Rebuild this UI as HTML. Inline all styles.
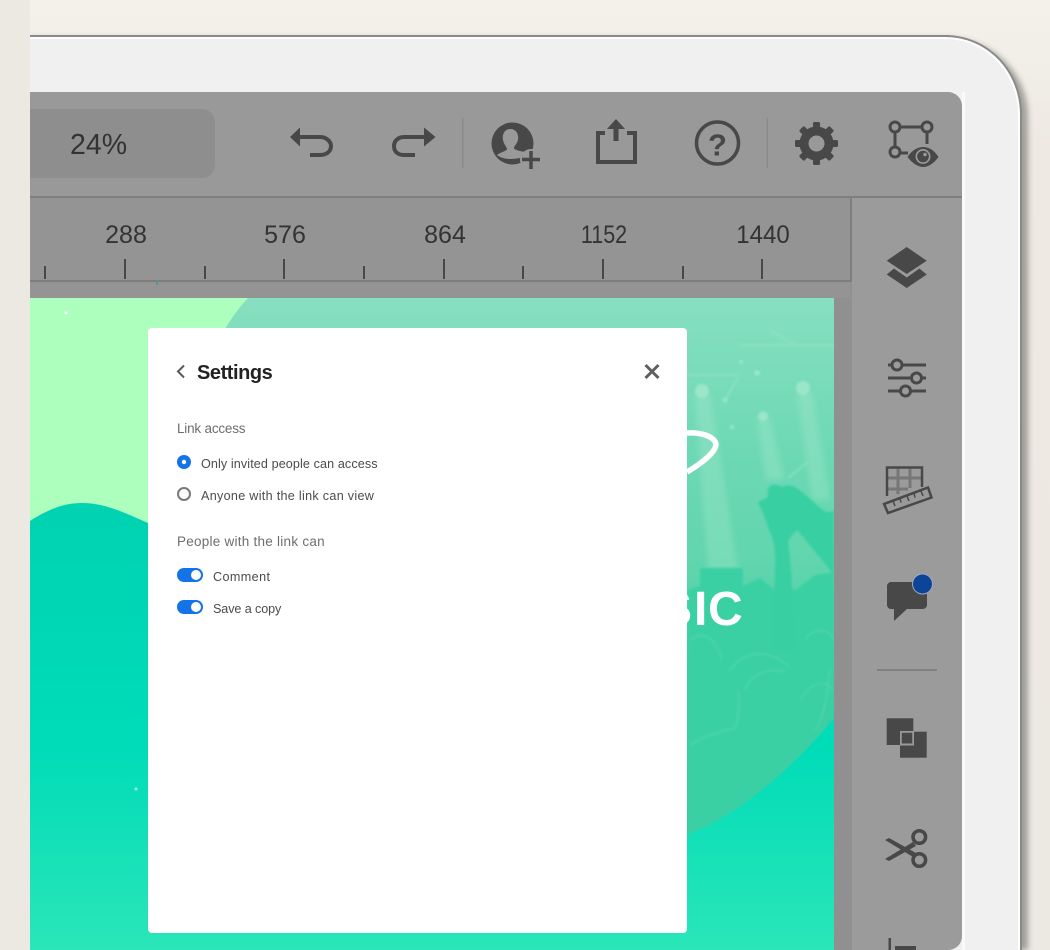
<!DOCTYPE html>
<html><head><meta charset="utf-8"><style>
html,body{margin:0;padding:0;width:1050px;height:950px;overflow:hidden;background:#f3f0ea}
body{position:relative;font-family:"Liberation Sans",sans-serif}
svg.bg{position:absolute;left:0;top:0}
.t{position:absolute;white-space:nowrap;line-height:1}
.r{font-size:25px;color:#333;text-align:center;width:80px}
#dlg{position:absolute;left:148px;top:328px;width:539px;height:605px;background:#fff;border-radius:4px}
#dlg .t{color:#4b4b4b}
.h{font-size:13.5px;color:#6e6e6e!important}
.l{font-size:12.6px}
.tg{position:absolute;left:29px;width:26px;height:14px;border-radius:7px;background:#1473e6}
.tg:after{content:"";position:absolute;right:2px;top:2px;width:10px;height:10px;border-radius:50%;background:#fff}
</style></head><body>
<svg class="bg" width="1050" height="950" viewBox="0 0 1050 950">
<defs>
<linearGradient id="bgg" x1="0" y1="0" x2="0" y2="1"><stop offset="0" stop-color="#f4f1eb"/><stop offset=".15" stop-color="#eeeae3"/><stop offset="1" stop-color="#ece8e2"/></linearGradient>
<linearGradient id="teal" gradientUnits="userSpaceOnUse" x1="0" y1="500" x2="0" y2="950"><stop offset="0" stop-color="#00d2b2"/><stop offset=".55" stop-color="#00dcb8"/><stop offset="1" stop-color="#2ae6b8"/></linearGradient>
<linearGradient id="photo" gradientUnits="userSpaceOnUse" x1="0" y1="298" x2="0" y2="840"><stop offset="0" stop-color="#86dfc0"/><stop offset=".25" stop-color="#70d9b5"/><stop offset=".5" stop-color="#60d5ad"/><stop offset=".7" stop-color="#36cfa0"/><stop offset="1" stop-color="#2dcb9c"/></linearGradient>
<filter id="sh" x="-5%" y="-5%" width="110%" height="110%"><feGaussianBlur stdDeviation="3"/></filter>
<filter id="b3"><feGaussianBlur stdDeviation="3"/></filter>
<filter id="b1"><feGaussianBlur stdDeviation="1"/></filter>
<clipPath id="cv"><rect x="30" y="298" width="804" height="652"/></clipPath>
<clipPath id="ph"><path d="M248 298C190 360 170 480 230 620C290 760 450 860 600 850C630 848 660 845 687 835C745 812 800 760 834 718V298z"/></clipPath>
<clipPath id="scr"><path d="M30 92H948a14 14 0 0 1 14 14V936a14 14 0 0 1-14 14H30z"/></clipPath>
</defs>
<rect width="1050" height="950" fill="url(#bgg)"/>
<path d="M30 38H945C992 38 1028 72 1028 118V950H30z" fill="#55554f" filter="url(#sh)" opacity=".5"/>
<path d="M30 35H945C988 35 1022 70 1022 115V950H30z" fill="#8a8a88"/>
<path d="M30 37H945C987 37 1020 71 1020 115V950H30z" fill="#fff"/>
<path d="M30 39H945C985 39 1018 72 1018 115V950H30z" fill="#f0f0f0"/>
<rect x="960" y="152" width="5" height="1" fill="#ddd"/>
<rect x="962" y="92" width="3" height="858" fill="#fafafa"/>
<rect x="0" y="0" width="30" height="950" fill="#ece8e2"/>
<g clip-path="url(#scr)">
<rect x="30" y="92" width="932" height="858" fill="#999"/>
<rect x="852" y="198" width="110" height="752" fill="#9b9b9b"/>
<rect x="834" y="282" width="18" height="668" fill="#909090"/>
<rect x="30" y="198" width="820" height="100" fill="#949494"/>
<rect x="30" y="196" width="932" height="2" fill="#7f7f7f"/>
<rect x="850" y="198" width="2" height="84" fill="#7f7f7f"/>
<rect x="30" y="280" width="820" height="2" fill="#7d7d7d"/>
<rect x="10" y="109" width="205" height="69" rx="13" fill="#8e8e8e"/>
<rect x="462" y="118" width="1.500" height="50" fill="#8a8a8a"/>
<rect x="766.500" y="118" width="1.500" height="50" fill="#8a8a8a"/>
<g fill="#484848">
<rect x="44" y="266" width="2" height="13"/><rect x="124" y="259" width="2" height="20"/><rect x="204" y="266" width="2" height="13"/><rect x="283" y="259" width="2" height="20"/><rect x="363" y="266" width="2" height="13"/><rect x="443" y="259" width="2" height="20"/><rect x="522" y="266" width="2" height="13"/><rect x="602" y="259" width="2" height="20"/><rect x="682" y="266" width="2" height="13"/><rect x="761" y="259" width="2" height="20"/>
</g>
<rect x="156" y="281" width="2" height="4" fill="#4a9a9a"/>
<g clip-path="url(#cv)">
<rect x="30" y="298" width="804" height="652" fill="#adffbe"/>
<path d="M30 521C50 508 66 503 82 503C105 503 125 513 148 523V950H30z" fill="url(#teal)"/>
<rect x="148" y="520" width="686" height="430" fill="url(#teal)"/>
<g clip-path="url(#ph)">
<rect x="30" y="298" width="804" height="652" fill="url(#photo)"/>
<g fill="#c8f3e0" opacity=".22" filter="url(#b3)">
<path d="M695 395L710 395L738 570L708 570z"/><path d="M797 392L812 392L830 500L812 500z"/><path d="M757 418L770 418L784 480L766 480z"/>
</g>
<g fill="#a8ebd0" opacity=".7" filter="url(#b1)"><circle cx="702" cy="391" r="7"/><circle cx="803" cy="388" r="7"/><circle cx="763" cy="416" r="5"/><circle cx="757" cy="373" r="3"/><circle cx="725" cy="400" r="2.500"/><circle cx="732" cy="427" r="2"/><circle cx="788" cy="533" r="3"/><circle cx="741" cy="362" r="2"/></g>
<path d="M725 400L738 378M788 478L808 462" stroke="#a8ebd0" stroke-width="2" opacity=".4" fill="none" filter="url(#b1)"/>
<path d="M740 345H834M680 375H740M770 330L795 345" stroke="#a8ebd0" stroke-width="3" opacity=".25" fill="none" filter="url(#b1)"/>
<g filter="url(#b1)">
<path d="M688 590L700 586V568H743V586L760 578L775 590H796L815 575L834 572V760L687 850z" fill="#3bd0a4"/>
<path d="M758 503C762 510 766 520 769 530C774 540 776 550 775 570L773 650H796L792 590C791 565 789 550 788 540L797 530C810 545 822 560 834 575V510C826 517 818 505 808 497C798 488 790 482 782 487C772 482 766 486 768 496C766 500 762 498 758 503Z" fill="#38cfa2"/>
</g>
<g fill="none" stroke="#6fdcbc" stroke-width="2" opacity=".3" filter="url(#b1)">
<path d="M730 670C745 650 770 648 790 668"/><path d="M745 690C752 672 770 668 785 672"/><path d="M690 640C705 628 716 640 722 660"/>
<path d="M805 640C815 625 830 630 834 640"/><path d="M800 700C812 680 825 680 834 690"/>
<path d="M690 745C705 735 720 732 735 728C738 720 740 705 738 690"/><path d="M830 670C826 690 828 710 815 730"/>
</g>
</g>
<path d="M687 433C700 432 714 436 716 444C716 452 702 463 687 472" fill="none" stroke="#fff" stroke-width="5.500"/>
<text y="625" font-family="Liberation Sans" font-weight="700" font-size="48" fill="#fff"><tspan x="660">S</tspan><tspan x="694">I</tspan><tspan x="708">C</tspan></text>
<circle cx="66" cy="313" r="1.500" fill="#fff"/><circle cx="136" cy="789" r="1.500" fill="#9ff0d8"/>
</g>
<!-- undo -->
<path d="M298 137H320C327 137 331 142 331 146C331 151 327 155 320 155H310" fill="none" stroke="#484848" stroke-width="4"/>
<path d="M290 137L300 127.500V146.500z" fill="#484848"/>
<!-- redo -->
<path d="M426 137H404C397 137 394 142 394 146C394 151 397 155 404 155H415" fill="none" stroke="#484848" stroke-width="4"/>
<path d="M435.500 137L424 127.500V146.500z" fill="#484848"/>
<!-- user plus -->
<circle cx="512.500" cy="143.500" r="21" fill="#484848"/>
<path d="M510.500 129C504 129 502 135 503 140C504 145 507 147 507 149C507 151 501 152 497 155C502 159 510 160 520 158L525 152C520 151 514 150 514 148C514 146 517 144 518 140C519 134 516 129 510.500 129Z" fill="#999"/>
<circle cx="531" cy="160" r="11" fill="#999"/>
<path d="M531 151V169M522 159.500H540" stroke="#484848" stroke-width="3.500" fill="none"/>
<!-- share -->
<path d="M605 133H598V162H635V133H627" fill="none" stroke="#484848" stroke-width="4"/>
<path d="M616 119L625 129H618.500V141H613.500V129H607z" fill="#484848"/>
<!-- help -->
<circle cx="717.500" cy="143" r="21" fill="none" stroke="#484848" stroke-width="3.500"/>
<text x="717.500" y="155.500" text-anchor="middle" font-family="Liberation Sans" font-weight="700" font-size="31" fill="#484848">?</text>
<!-- gear -->
<g transform="translate(816.500 143.500)" fill="#484848"><circle r="17"/><rect x="-3.500" y="-21.500" width="7" height="43" rx="1.500"/><rect x="-3.500" y="-21.500" width="7" height="43" rx="1.500" transform="rotate(45)"/><rect x="-3.500" y="-21.500" width="7" height="43" rx="1.500" transform="rotate(90)"/><rect x="-3.500" y="-21.500" width="7" height="43" rx="1.500" transform="rotate(135)"/><circle r="8" fill="#999"/></g>
<!-- proto -->
<g fill="none" stroke="#484848" stroke-width="3"><path d="M900 127H922M927 132V144M895 132V147M900 153H908"/><circle cx="895" cy="127" r="5"/><circle cx="927" cy="127" r="5"/><circle cx="895" cy="152" r="5"/></g>
<path d="M907.500 157C912 150 918 147 923 147C929 147 934 150 938.500 157C934 163 929 167 923 167C918 167 912 163 907.500 157Z" fill="#484848"/>
<circle cx="923" cy="156.500" r="7.500" fill="#999"/><circle cx="923" cy="156.500" r="5.800" fill="#484848"/><circle cx="925" cy="154.500" r="1.800" fill="#999"/>
<!-- layers -->
<path d="M906.700 247L926.700 260.700L906.700 274L886.700 260.700z" fill="#484848"/>
<path d="M894 268.500L886.700 274.500L906.700 288L926.700 274.500L919.400 268.500L906.700 277.500z" fill="#484848"/>
<!-- sliders -->
<g fill="none" stroke="#484848" stroke-width="3"><path d="M888 365H892M902 365H926M888 378H911M922 378H926M888 391H900M911 391H926"/><circle cx="897" cy="365" r="5"/><circle cx="916.500" cy="378" r="5"/><circle cx="905.500" cy="391" r="5"/></g>
<!-- grid ruler -->
<g fill="none"><path d="M887 478H921M887 489H908M898 468V494M910 468V488" stroke="#777" stroke-width="3"/><path d="M887 496V467.500H922V487" stroke="#484848" stroke-width="2.500"/><path d="M884 504L928 487.500L931.500 497.500L888 513z" fill="#999" stroke="#484848" stroke-width="2.500"/><path d="M893 501L895 506M900 498.500L901 502.500M907 496L909 501M914 493.500L915 497.500M921 491L923 496" stroke="#484848" stroke-width="1.500"/></g>
<!-- comment -->
<path d="M891 582H923C925 582 927 584 927 586V605C927 607 925 609 923 609H907L894 621V609H891C889 609 887 607 887 605V586C887 584 889 582 891 582Z" fill="#484848"/>
<circle cx="922.500" cy="584" r="10.500" fill="#9eaac0"/><circle cx="922.500" cy="584" r="9.500" fill="#0c4597"/>
<rect x="877" y="669" width="60" height="2" fill="#808080"/>
<!-- arrange -->
<rect x="886.700" y="718.300" width="26.600" height="26.700" fill="#484848"/>
<rect x="900" y="731.700" width="26.700" height="26" fill="#484848"/>
<rect x="900" y="731" width="14" height="14.500" fill="#9b9b9b"/>
<rect x="901.700" y="732.700" width="10.600" height="10.800" fill="#484848"/>
<!-- scissors -->
<g fill="none" stroke="#484848" stroke-width="3.500"><circle cx="919.300" cy="837" r="6.300"/><circle cx="919.300" cy="860" r="6.300"/></g>
<path d="M885 840L889 838L916 853L913 857z" fill="#484848"/>
<path d="M885 859L889 861L916 846L913 842z" fill="#484848"/>
<rect x="888.500" y="938" width="2.500" height="12" fill="#484848"/><rect x="895" y="946" width="21" height="4" fill="#484848"/>
</g>
</svg>
<div class="t" style="left:70px;top:131px;font-size:28.5px;color:#333">24%</div>
<div class="t r" style="left:86px;top:223px">288</div>
<div class="t r" style="left:245px;top:223px">576</div>
<div class="t r" style="left:405px;top:223px">864</div>
<div class="t r" style="left:564px;top:223px;transform:scaleX(.86)">1152</div>
<div class="t r" style="left:723px;top:223px;transform:scaleX(.96)">1440</div>
<div id="dlg">
<svg style="position:absolute;left:0;top:0" width="539" height="70"><path d="M36 37.500L30 43.500L36 49.500" fill="none" stroke="#5a5a5a" stroke-width="2"/><path d="M497.500 37L510.500 50M510.500 37L497.500 50" fill="none" stroke="#5f5f5f" stroke-width="3"/></svg>
<div class="t" style="left:49px;top:35px;font-size:20px;font-weight:700;color:#222!important;letter-spacing:-.45px">Settings</div>
<div class="t h" style="left:29px;top:94px;letter-spacing:-.2px">Link access</div>
<svg style="position:absolute;left:29px;top:127px" width="15" height="48"><circle cx="7" cy="7" r="7" fill="#1473e6"/><circle cx="7" cy="7" r="2.200" fill="#fff"/><circle cx="7" cy="39" r="6" fill="#fff" stroke="#7a7a7a" stroke-width="2"/></svg>
<div class="t l" style="left:53px;top:130px;letter-spacing:.1px">Only invited people can access</div>
<div class="t l" style="left:53px;top:162px;letter-spacing:.3px">Anyone with the link can view</div>
<div class="t h" style="left:29px;top:207px;letter-spacing:.25px">People with the link can</div>
<div class="tg" style="top:240px"></div>
<div class="t l" style="left:65px;top:243px;letter-spacing:.4px">Comment</div>
<div class="tg" style="top:272px"></div>
<div class="t l" style="left:65px;top:275px;letter-spacing:-.1px">Save a copy</div>
</div>
</body></html>
